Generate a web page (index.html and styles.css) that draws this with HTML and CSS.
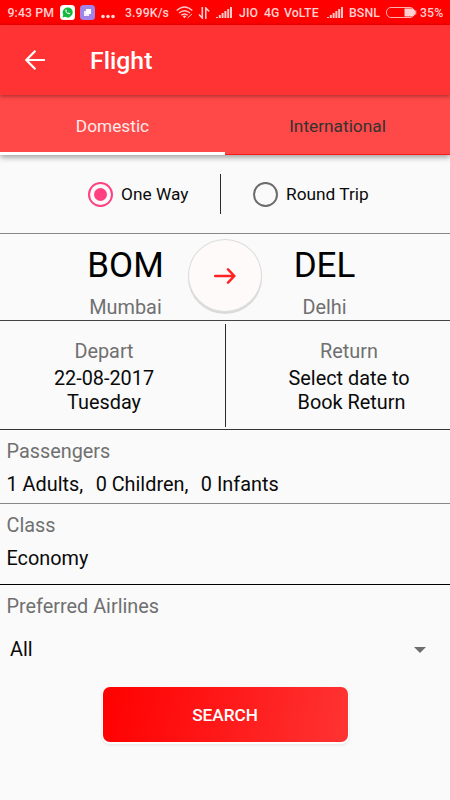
FILE: index.html
```html
<!DOCTYPE html>
<html lang="en">
<head>
    <meta charset="UTF-8">
    <meta name="viewport" content="width=device-width, initial-scale=1.0">
    <title>Flight</title>
    <link rel="stylesheet" href="styles.css">
</head>
<body>
    <div class="status-bar">
        <span class="status-time">9:43 PM</span>
        <svg class="icon-app" width="15" height="15" viewBox="0 0 15 15">
            <rect width="15" height="15" rx="3.5" fill="#fff"/>
            <path d="M2.5 12.6l.8-2.8a5 5 0 1 1 2 2z" fill="#16b83e"/>
            <path d="M5.5 4.8c-.8 1.9 2.2 5 4.3 4.4l.3-1-1.4-.7-.6.6c-.9-.4-1.4-1-1.7-1.7l.5-.6-.6-1.3z" fill="#fff"/>
        </svg>
        <svg class="icon-app" width="15" height="15" viewBox="0 0 15 15">
            <rect width="15" height="15" rx="3.5" fill="#a184e8"/>
            <rect x="6" y="4" width="5" height="5" fill="#fff"/>
            <rect x="4" y="6" width="5" height="5" fill="#fff" opacity=".85"/>
        </svg>
        <svg class="icon-dots" width="14" height="15" viewBox="0 0 14 15">
            <g fill="#ffd5d5"><circle cx="2" cy="8.5" r="1.8"/><circle cx="7" cy="8.5" r="1.8"/><circle cx="12" cy="8.5" r="1.8"/></g>
        </svg>
        <span class="status-speed">3.99K/s</span>
        <svg class="icon-wifi" width="17" height="13" viewBox="0 0 17 13">
            <g fill="none" stroke="#ffc9c9" stroke-width="1.4">
                <path d="M.7 4.6Q8.5-2.6 16.3 4.6"/>
                <path d="M3 7.1Q8.5 2.2 14 7.1"/>
                <path d="M5.3 9.3Q8.5 6.6 11.7 9.3"/>
            </g>
            <path d="M6.6 10.2q1.9-1.4 3.8 0l-1.9 2z" fill="#ffc9c9"/>
            <path d="M11.5 12l4.5-4" stroke="#ffc9c9"/>
        </svg>
        <svg class="icon-data" width="12" height="12" viewBox="0 0 12 12">
            <path d="M4.3 0v11L1 7.5M7.8 12V1l3.4 3.5" fill="none" stroke="#ffc9c9" stroke-width="1.6"/>
        </svg>
        <svg class="icon-signal" width="16" height="11" viewBox="0 0 16 11">
            <path d="M0 10h2v1H0zM2.8 8h2v3h-2zM5.6 6h2v5h-2zM8.4 4h2v7h-2zM11.2 2h2v9h-2zM14 0h2v11h-2z" fill="#ffc9c9"/>
        </svg>
        <span class="status-carrier">JIO</span>
        <span class="status-4g">4G</span>
        <span class="status-volte">VoLTE</span>
        <svg class="icon-signal-two" width="16" height="11" viewBox="0 0 16 11">
            <path d="M0 10h2v1H0zM2.8 8h2v3h-2zM5.6 6h2v5h-2zM8.4 4h2v7h-2zM11.2 2h2v9h-2zM14 0h2v11h-2z" fill="#ffc9c9"/>
        </svg>
        <span class="status-bsnl">BSNL</span>
        <svg class="icon-battery" width="31" height="11" viewBox="0 0 31 11">
            <rect x=".5" y=".5" width="28" height="10" rx="4.5" fill="none" stroke="#ffb0b0"/>
            <path d="M18.5 1.5H25a4 4 0 0 1 0 8h-6.5z" fill="#ffd0d0"/>
            <path d="M29.7 3.5v4" stroke="#ffb0b0" stroke-width="1.2"/>
        </svg>
        <span class="status-percent">35%</span>
    </div>

    <header class="toolbar">
        <svg class="back" width="20" height="20" viewBox="0 0 20 20">
            <path d="M10.4.8L1.4 10l9 9.2M1.4 10H20" fill="none" stroke="#fff" stroke-width="2.2"/>
        </svg>
        <h1 class="title">Flight</h1>
    </header>

    <nav class="tabs">
        <div class="tab active">Domestic</div>
        <div class="tab">International</div>
    </nav>

    <main>
        <section class="trip-type">
            <div class="option option-one">
                <span class="radio checked"></span>
                <span class="one-way">One Way</span>
            </div>
            <div class="divider"></div>
            <div class="option option-round">
                <span class="radio"></span>
                <span class="round-trip">Round Trip</span>
            </div>
        </section>

        <section class="route">
            <div class="city from">
                <div class="code">BOM</div>
                <div class="name">Mumbai</div>
            </div>
            <div class="swap">
                <svg width="22" height="16" viewBox="0 0 22 16">
                    <path d="M1.2 8h19M14 1.4L20.4 8 14 14.6" fill="none" stroke="#ff2222" stroke-width="2.5" stroke-linecap="round" stroke-linejoin="round"/>
                </svg>
            </div>
            <div class="city to">
                <div class="code">DEL</div>
                <div class="name">Delhi</div>
            </div>
        </section>

        <section class="dates">
            <div class="date depart">
                <div class="label">Depart</div>
                <div class="value">22-08-2017<br>Tuesday</div>
            </div>
            <div class="divider"></div>
            <div class="date return">
                <div class="label">Return</div>
                <div class="value">Select date to<br>&nbsp;Book Return</div>
            </div>
        </section>

        <section class="field passengers">
            <div class="label">Passengers</div>
            <div class="value counts"><span>1 Adults,</span><span>0 Children,</span><span>0 Infants</span></div>
        </section>

        <section class="field class">
            <div class="label">Class</div>
            <div class="value">Economy</div>
        </section>

        <section class="field airlines">
            <div class="label">Preferred Airlines</div>
            <div class="select">
                <span>All</span>
                <span class="caret"></span>
            </div>
        </section>

        <button class="search">SEARCH</button>
    </main>
</body>
</html>
```
FILE: styles.css
```css
* {
    box-sizing: border-box;
}
body {
    margin: 0;
    width: 450px;
    height: 800px;
    overflow: hidden;
    background: #fafafa;
    color: #0a0a0a;
    font-family: Roboto, "Liberation Sans", sans-serif;
    font-size: 19.85px;
    line-height: 24px;
}
svg {
    display: block;
    flex: none;
}

/* status bar */
.status-bar {
    display: flex;
    align-items: center;
    height: 25px;
    padding-left: 7.5px;
    background: #ff0000;
    color: #ffd0d0;
    font-size: 12.3px;
    font-weight: 500;
    line-height: 26px;
    white-space: nowrap;
}
.status-bar span {
    flex: none;
    letter-spacing: 0.1px;
}
.status-time {
    width: 52.5px;
}
.icon-app {
    margin-right: 5px;
}
.icon-dots {
    margin: 6px 10px 0 1px;
}
.status-speed {
    width: 51px;
}
.icon-data {
    margin: 0 6px 0 5px;
}
.status-carrier {
    width: 25px;
    margin-left: 7px;
}
.status-4g {
    width: 20px;
}
.status-volte {
    width: 43px;
}
.status-bsnl {
    width: 37px;
    margin-left: 6px;
}
.icon-battery {
    margin-right: 3px;
}

/* toolbar */
.toolbar {
    position: relative;
    z-index: 1;
    display: flex;
    align-items: center;
    height: 70px;
    padding: 0 25px;
    background: #ff3333;
    box-shadow: 0 1px 4px rgba(0,0,0,0.4);
}
.title {
    margin: 1px 0 0 45px;
    color: #fff;
    font-size: 24.8px;
    font-weight: 500;
}

/* tabs */
.tabs {
    display: flex;
    height: 60px;
    background: #ff4848;
    box-shadow: 0 2px 6px rgba(0,0,0,0.4);
}
.tab {
    flex: 1;
    padding-top: 3px;
    border-bottom: 1px solid #ff1a1a;
    color: #333;
    font-size: 17.3px;
    line-height: 56px;
    text-align: center;
}
.tab.active {
    border-bottom: 3px solid #fff;
    color: #ffeaea;
}

/* trip type */
.trip-type {
    display: flex;
    align-items: center;
    height: 78px;
    padding-left: 88px;
    font-size: 17.3px;
}
.option {
    display: flex;
    align-items: center;
    gap: 8px;
}
.option-one {
    width: 132px;
}
.option-round {
    margin-left: 32px;
}
.radio {
    width: 25px;
    height: 25px;
    border: 2px solid #6b6b6b;
    border-radius: 50%;
}
.radio.checked {
    padding: 4px;
    border-color: #ff4081;
    background: #ff4081 content-box;
}
.divider {
    width: 1px;
    background: #2a2a2a;
}
.trip-type .divider {
    height: 40px;
}

/* route */
.route {
    display: flex;
    height: 87px;
    border-top: 1px solid #888;
}
.city {
    width: 125px;
    text-align: center;
}
.from {
    margin-left: 63px;
}
.code {
    padding-top: 11px;
    color: #000;
    font-size: 35px;
    line-height: 42px;
}
.name {
    margin-top: 9px;
}
.name,
.label {
    color: #707070;
}
.swap {
    display: flex;
    align-items: center;
    justify-content: center;
    width: 74px;
    height: 73px;
    margin-top: 5px;
    border: 1px solid #ddd;
    border-radius: 50%;
    background: #fffafa;
    box-shadow: 0 2px 0 #dadada;
}

/* dates */
.dates {
    display: flex;
    height: 109px;
    border-top: 1px solid #444;
}
.dates .divider {
    height: 103px;
    margin-top: 3px;
}
.date {
    padding-top: 19px;
    text-align: center;
}
.date .value {
    margin-top: 3px;
}
.depart {
    width: 225px;
    padding-right: 17px;
}
.return {
    flex: 1;
    padding-left: 22px;
}

/* fields */
.field {
    padding: 10px 6.5px 0;
    border-top: 1px solid #333;
}
.field .value {
    margin-top: 9px;
}
.passengers {
    height: 74px;
}
.counts {
    display: flex;
    gap: 12.5px;
}
.class {
    height: 81px;
    border-color: #888;
}
.airlines {
    height: 103px;
    border-color: #000;
}
.select {
    display: flex;
    align-items: center;
    justify-content: space-between;
    margin-top: 19px;
    padding: 0 17.5px 0 3.5px;
}
.caret {
    border: 6px solid transparent;
    border-top-color: #6e6e6e;
    border-bottom: 0;
}

.search {
    display: block;
    width: 245px;
    height: 55px;
    margin: 0 auto;
    border: 0;
    border-radius: 7px;
    background: linear-gradient(100deg, #ff0000, #ff3333);
    box-shadow: 0 1px 0 1px #fff, 0 2px 2px 2px #eee;
    color: #fff;
    font-family: inherit;
    font-size: 17.2px;
    font-weight: 500;
}
```
